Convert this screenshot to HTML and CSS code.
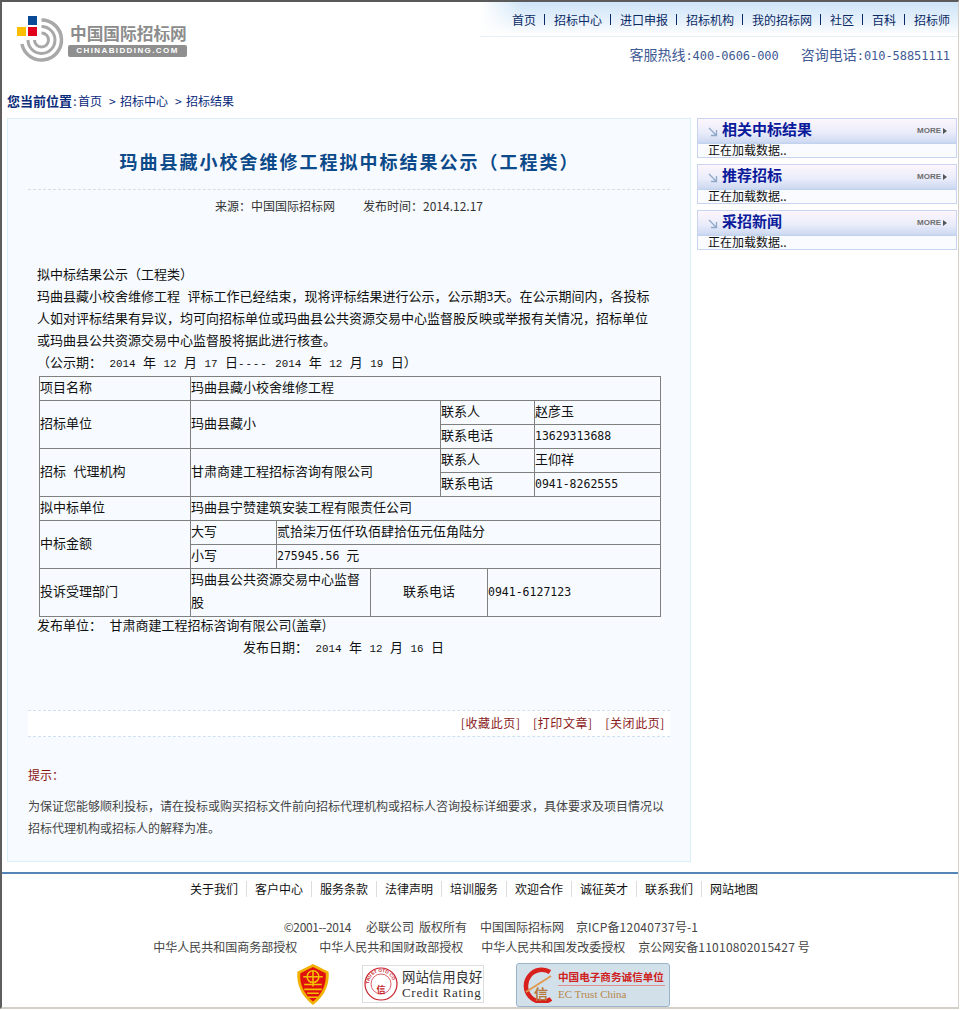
FILE: index.html
```html
<!DOCTYPE html>
<html lang="zh-CN">
<head>
<meta charset="utf-8">
<title>玛曲县藏小校舍维修工程拟中标结果公示（工程类）</title>
<link rel="stylesheet" href="styles.css">
</head>
<body>
<div class="page">
  <header class="head">
    <a class="logo">
      <svg width="50" height="50" viewBox="0 0 50 50" class="logo-mark">
        <g fill="none" stroke="#a8a8a8">
          <path d="M24.5 4 A20 20 0 1 1 4.9 28" stroke-width="3.5"/>
          <path d="M24.5 10.5 A13.5 13.5 0 1 1 11 24" stroke-width="3"/>
          <path d="M24.5 17 A7 7 0 1 1 17.5 24" stroke-width="3"/>
        </g>
        <rect x="11" y="0" width="9" height="9" fill="#0b4a96"/>
        <rect x="0" y="11" width="9" height="9" fill="#fcbf00"/>
        <rect x="11" y="11" width="9" height="9" fill="#e0001b"/>
      </svg>
      <span class="logo-text">
        <span class="logo-cn">中国国际招标网</span>
        <span class="logo-en">CHINABIDDING.COM</span>
      </span>
    </a>
    <div class="head-right">
      <nav class="topnav">
        <a>首页</a><a>招标中心</a><a>进口申报</a><a>招标机构</a><a>我的招标网</a><a>社区</a><a>百科</a><a>招标师</a>
      </nav>
      <div class="hotline"><span>客服热线<span class="tel">:400-0606-000</span></span><span>咨询电话<span class="tel">:010-58851111</span></span></div>
    </div>
  </header>

  <div class="crumb"><b>您当前位置</b><span class="colon">:</span>首页<i>&gt;</i>招标中心<i>&gt;</i>招标结果</div>

  <div class="columns">
    <main class="article">
      <h1>玛曲县藏小校舍维修工程拟中标结果公示（工程类）</h1>
      <p class="meta">来源：中国国际招标网<span class="meta-time">发布时间：2014.12.17</span></p>
      <div class="content">
        <p>拟中标结果公示（工程类）</p>
        <p>玛曲县藏小校舍维修工程<span class="n"> </span>评标工作已经结束，现将评标结果进行公示，公示期<span class="t">3</span>天。在公示期间内，各投标<br>人如对评标结果有异议，均可向招标单位或玛曲县公共资源交易中心监督股反映或举报有关情况，招标单位<br>或玛曲县公共资源交易中心监督股将据此进行核查。</p>
        <p>（公示期：<span class="n"> 2014 </span>年<span class="n"> 12 </span>月<span class="n"> 17 </span>日<span class="n dash">----</span><span class="n"> 2014 </span>年<span class="n"> 12 </span>月<span class="n"> 19 </span>日）</p>
        <table class="info">
          <colgroup><col class="c1"><col class="c2"><col class="c3"><col class="c4"><col class="c5"><col class="c6"><col class="c7"></colgroup>
          <tr><td>项目名称</td><td colspan="6">玛曲县藏小校舍维修工程</td></tr>
          <tr><td rowspan="2">招标单位</td><td rowspan="2" colspan="3">玛曲县藏小</td><td colspan="2">联系人</td><td>赵彦玉</td></tr>
          <tr><td colspan="2">联系电话</td><td><span class="t">13629313688</span></td></tr>
          <tr><td rowspan="2">招标<span class="n"> </span>代理机构</td><td rowspan="2" colspan="3">甘肃商建工程招标咨询有限公司</td><td colspan="2">联系人</td><td>王仰祥</td></tr>
          <tr><td colspan="2">联系电话</td><td><span class="t">0941-8262555</span></td></tr>
          <tr><td>拟中标单位</td><td colspan="6">玛曲县宁赞建筑安装工程有限责任公司</td></tr>
          <tr><td rowspan="2">中标金额</td><td>大写</td><td colspan="5">贰拾柒万伍仟玖佰肆拾伍元伍角陆分</td></tr>
          <tr><td>小写</td><td colspan="5"><span class="t">275945.56 </span>元</td></tr>
          <tr class="tall"><td>投诉受理部门</td><td colspan="2"><div class="lift">玛曲县公共资源交易中心监督股</div></td><td colspan="2" class="center">联系电话</td><td colspan="2"><span class="t">0941-6127123</span></td></tr>
        </table>
        <p class="issuer">发布单位：<span class="n"> </span>甘肃商建工程招标咨询有限公司(盖章)</p>
        <p class="date">发布日期：<span class="n"> 2014 </span>年<span class="n"> 12 </span>月<span class="n"> 16 </span>日</p>
      </div>
      <div class="actions"><a>[收藏此页]</a><a>[打印文章]</a><a>[关闭此页]</a></div>
      <div class="tip">
        <h2>提示：</h2>
        <p>为保证您能够顺利投标，请在投标或购买招标文件前向招标代理机构或招标人咨询投标详细要求，具体要求及项目情况以<br>招标代理机构或招标人的解释为准。</p>
      </div>
    </main>

    <aside class="side">
      <section class="box">
        <div class="box-head"><svg class="arrow" width="10" height="10" viewBox="0 0 10 10"><path d="M1 1 L8.5 8.5 M8.5 3 V8.5 H3" fill="none" stroke="#8fa8c8" stroke-width="1.3"/></svg><h3>相关中标结果</h3><span class="more">MORE<i></i></span></div>
        <div class="box-body">正在加载数据..</div>
      </section>
      <section class="box">
        <div class="box-head"><svg class="arrow" width="10" height="10" viewBox="0 0 10 10"><path d="M1 1 L8.5 8.5 M8.5 3 V8.5 H3" fill="none" stroke="#8fa8c8" stroke-width="1.3"/></svg><h3>推荐招标</h3><span class="more">MORE<i></i></span></div>
        <div class="box-body">正在加载数据..</div>
      </section>
      <section class="box">
        <div class="box-head"><svg class="arrow" width="10" height="10" viewBox="0 0 10 10"><path d="M1 1 L8.5 8.5 M8.5 3 V8.5 H3" fill="none" stroke="#8fa8c8" stroke-width="1.3"/></svg><h3>采招新闻</h3><span class="more">MORE<i></i></span></div>
        <div class="box-body">正在加载数据..</div>
      </section>
    </aside>
  </div>

  <footer class="foot">
    <nav class="footnav"><a>关于我们</a><a>客户中心</a><a>服务条款</a><a>法律声明</a><a>培训服务</a><a>欢迎合作</a><a>诚征英才</a><a>联系我们</a><a>网站地图</a></nav>
    <p class="copy copy-a"><span class="tight">©2001--2014</span><span class="g15"></span>必联公司<span class="g5"></span>版权所有<span class="g13"></span>中国国际招标网<span class="g12"></span>京<span class="l">ICP</span>备<span class="l">12040737</span>号<span class="l">-1</span></p>
    <p class="copy copy-b">中华人民共和国商务部授权<span class="g22"></span>中华人民共和国财政部授权<span class="g18"></span>中华人民共和国发改委授权<span class="g13"></span>京公网安备<span class="l">11010802015427</span> 号</p>
    <div class="badges">
      <svg class="badge-gov" width="36" height="43" viewBox="1 0 34 44">
        <path d="M18 1 L34 9 C35 22 30 34 18 43 C6 34 1 22 2 9 Z" fill="#f2b000"/>
        <path d="M18 4 L31 10.5 C32 22 27 32 18 39.5 C9 32 4 22 5 10.5 Z" fill="#e01010"/>
        <g fill="none" stroke="#f4c000" stroke-width="1.6"><circle cx="18" cy="14" r="6"/><path d="M8 14 H28 M18 8 V24 M9 22 H27 M9 27 H27 M12 31 H24 M13 35 H23"/></g>
      </svg>
      <div class="badge-credit">
        <svg width="34" height="34" viewBox="0 0 34 34">
          <defs><path id="ring" d="M5 17 A12 12 0 0 1 29 17"/></defs>
          <circle cx="17" cy="17" r="16" fill="#fff" stroke="#c8202a" stroke-width="1.2"/>
          <circle cx="17" cy="17" r="10" fill="none" stroke="#c8202a" stroke-width="0.7"/>
          <text class="ring-text"><textPath href="#ring">TRUST OTO CO</textPath></text>
          <text class="ring-mark" x="12.5" y="26">信</text>
        </svg>
        <span class="credit-text"><span class="credit-cn">网站信用良好</span><span class="credit-en">Credit Rating</span></span>
      </div>
      <div class="badge-ec">
        <svg width="36" height="36" viewBox="0 0 36 36"><path d="M29 5 A16 16 0 1 0 30 32" fill="none" stroke="#d8201c" stroke-width="4.5"/><path d="M5 25 L30 9" stroke="#e09a50" stroke-width="2"/></svg>
        <span class="ec-stamp">信</span>
        <span class="ec-text"><span class="ec-cn">中国电子商务诚信单位</span><span class="ec-en">EC Trust China</span></span>
      </div>
    </div>
  </footer>
</div>
</body>
</html>
```
FILE: styles.css
```css
* { box-sizing: border-box; }
html, body { margin: 0; padding: 0; }
body { background: #fff; font-family: "Noto Sans CJK SC", "Liberation Sans", sans-serif; font-size: 12px; color: #333; }
a { color: inherit; text-decoration: none; }
p { margin: 0; }
.page { width: 959px; height: 1009px; border-top: 2px solid #5a5a5a; border-left: 2px solid #5e5e5e; border-right: 1px solid #d4d0c8; border-bottom: 2px solid #d4d0c8; overflow: hidden; }

.head { display: flex; justify-content: space-between; height: 86px; }
.logo { display: flex; align-items: flex-start; padding: 14px 0 0 15px; }
.logo-mark { flex: none; }
.logo-text { display: flex; flex-direction: column; margin: 7px 0 0 1px; }
.logo-cn { padding-left: 2px; font-size: 16.7px; line-height: 20px; font-weight: 700; color: #8c8c8c; white-space: nowrap; }
.logo-en { margin-top: 2px; width: 119px; height: 12px; background: #8f8f8f; border-radius: 2px; color: #fff; font: 700 8px/12px "Liberation Sans", sans-serif; letter-spacing: 1.4px; text-align: center; white-space: nowrap; }
.head-right { width: 478px; }
.topnav { display: flex; justify-content: flex-end; align-items: center; height: 35px; padding: 0 8px 0 0; border-bottom: 1px solid #e6eef6; background: linear-gradient(to right, #fff 0, rgba(255,255,255,0) 9%), linear-gradient(#cfe4f8 0%, #e6f1fb 55%, #fff 100%); font-size: 12px; color: #0a2a66; white-space: nowrap; }
.topnav a { padding: 0 8.3px 0 8.7px; border-left: 1px solid #0a2a66; line-height: 11px; }
.topnav a:first-child { border-left: 0; }
.topnav a:last-child { padding-right: 0; }
.hotline { display: flex; justify-content: flex-end; gap: 22px; padding: 6px 8px 0 0; font-size: 14px; line-height: 22px; color: #3f5a94; white-space: nowrap; }
.tel { font-family: "DejaVu Sans Mono", monospace; font-size: 12px; letter-spacing: -0.05px; }

.crumb { height: 30px; padding: 3px 0 0 5px; font-size: 12px; line-height: 20px; color: #0a2a7a; }
.crumb b { font-size: 13px; font-weight: 700; }
.colon { display: inline-block; width: 6px; text-align: center; }
.crumb i { display: inline-block; width: 18px; padding-left: 7px; font-style: normal; }

.columns { display: flex; align-items: flex-start; padding-left: 5px; gap: 6px; }
.article { width: 684px; height: 744px; background: #f7fbff; border: 1px solid #dbeff9; padding: 0 20px; }
.article h1 { margin: 0; height: 71px; padding: 24px 0 0 1px; border-bottom: 1px dashed #d5dee8; text-align: center; font-size: 18px; line-height: 36px; font-weight: 700; letter-spacing: 2px; color: #0d4a8a; white-space: nowrap; }
.meta { margin-top: 6px; height: 20px; line-height: 20px; text-align: center; color: #333; }
.meta-time { margin-left: 28px; }
.content { padding: 47px 0 0 9px; font-size: 13px; line-height: 22px; color: #111; }
.n { font-family: "Liberation Mono", monospace; font-size: 10.83px; line-height: 1; white-space: pre-wrap; word-spacing: 1px; }
.dash { letter-spacing: 0.9px; }
.t { font-family: "DejaVu Sans Mono", monospace; font-size: 11.5px; line-height: 1; white-space: pre-wrap; }
.info { width: 621px; margin: 3px 0 0 2px; border-collapse: collapse; table-layout: fixed; font-size: 13px; line-height: 20px; color: #111; }
.info td { border: 1px solid #808080; padding: 0 0 3px; height: 24px; vertical-align: middle; }
.c1 { width: 151px; } .c2 { width: 86px; } .c3 { width: 94px; } .c4 { width: 70px; } .c5 { width: 47px; } .c6 { width: 47px; } .c7 { width: 126px; }
.center { text-align: center; }
.info .tall td { height: 48px; }
.lift { margin: -3px 0 0; line-height: 23px; }
.issuer { margin-top: -3px; }
.date { padding-left: 206px; }
.actions { margin-top: 52px; height: 27px; display: flex; justify-content: flex-end; align-items: center; gap: 12.5px; padding: 0 5px 3px 0; background: #fff; border-top: 1px dashed #cfe0f4; border-bottom: 1px dashed #cfe0f4; color: #8a1a1a; font-size: 12px; letter-spacing: 0.6px; }
.tip { padding-top: 27px; }
.tip h2 { margin: 0; font-size: 12px; line-height: 22px; font-weight: 400; color: #8a0f0f; }
.tip p { margin-top: 9px; line-height: 22px; font-size: 12px; color: #444; white-space: nowrap; }

.side { width: 260px; display: flex; flex-direction: column; gap: 6px; }
.box { height: 40px; border: 1px solid #c8d4f0; background: #f9fbff; }
.box-head { display: flex; align-items: center; height: 25px; background: linear-gradient(#fdf6fd 0%, #e9ecfa 55%, #cfdaf2 92%, #bcd0ee 100%); padding: 0 0 2px 10px; }
.arrow { flex: none; margin-top: 2px; }
.box-head h3 { margin: 0 0 3px 4px; flex: 1; font-size: 15px; line-height: 20px; font-weight: 700; color: #0a1a9a; }
.more { display: flex; align-items: center; gap: 2px; padding-right: 9px; font: 700 8px/10px "Liberation Sans", sans-serif; color: #6e6e6e; }
.more i { width: 0; height: 0; border-left: 4px solid #555; border-top: 3px solid transparent; border-bottom: 3px solid transparent; }
.box-body { padding-left: 10px; font-size: 12px; line-height: 12px; color: #111; }

.foot { margin-top: 10px; border-top: 2px solid #5585b8; }
.footnav { display: flex; justify-content: center; padding: 7px 12px 0 0; font-size: 12px; line-height: 16px; color: #111; }
.footnav a { padding: 0 8px; border-left: 1px solid #ddd; }
.footnav a:first-child { border-left: 0; }
.copy { text-align: center; font-size: 12px; line-height: 20px; color: #444; white-space: nowrap; }
.copy-a { margin-top: 20px; padding-left: 22px; }
.copy-b { padding-left: 3px; }
.l { letter-spacing: 0.25px; }
.tight { letter-spacing: -0.4px; }
.g5, .g12, .g13, .g15, .g18, .g22 { display: inline-block; }
.g5 { width: 5px; } .g12 { width: 12px; } .g13 { width: 13px; } .g15 { width: 15px; } .g18 { width: 18px; } .g22 { width: 22px; }
.badges { display: flex; align-items: flex-start; padding: 6px 0 0 293px; gap: 31px; }
.badge-gov { flex: none; }
.badge-credit { display: flex; align-items: center; flex: none; width: 122px; height: 38px; margin-top: 2px; padding-left: 1px; border: 1px solid #ddd; background: #fff; }
.ring-text { font: 700 4.5px "Liberation Sans", sans-serif; fill: #c8202a; }
.ring-mark { font: 700 9px "Noto Sans CJK SC", sans-serif; fill: #c8202a; }
.credit-text { display: flex; flex-direction: column; margin-left: 4px; color: #333; }
.credit-cn { font-size: 13.4px; line-height: 17px; white-space: nowrap; }
.credit-en { font: 13px/15px "Liberation Serif", serif; letter-spacing: 0.7px; white-space: nowrap; }
.badge-ec { position: relative; display: flex; align-items: center; flex: none; width: 154px; height: 44px; margin-left: 1px; border: 1px solid #9ab4cc; border-radius: 3px; background: #d2e0ea; padding-left: 4px; }
.ec-stamp { position: absolute; left: 17px; top: 20px; font-size: 14px; line-height: 18px; font-weight: 700; color: #b87a3c; }
.ec-text { display: flex; flex-direction: column; margin-left: 1px; flex: 1; }
.ec-cn { margin-right: 4px; font-size: 10.6px; line-height: 17px; font-weight: 700; color: #d02020; border-bottom: 1px solid #e09090; white-space: nowrap; }
.ec-en { font: 11px/16px "Liberation Serif", serif; color: #b8864a; }
```
